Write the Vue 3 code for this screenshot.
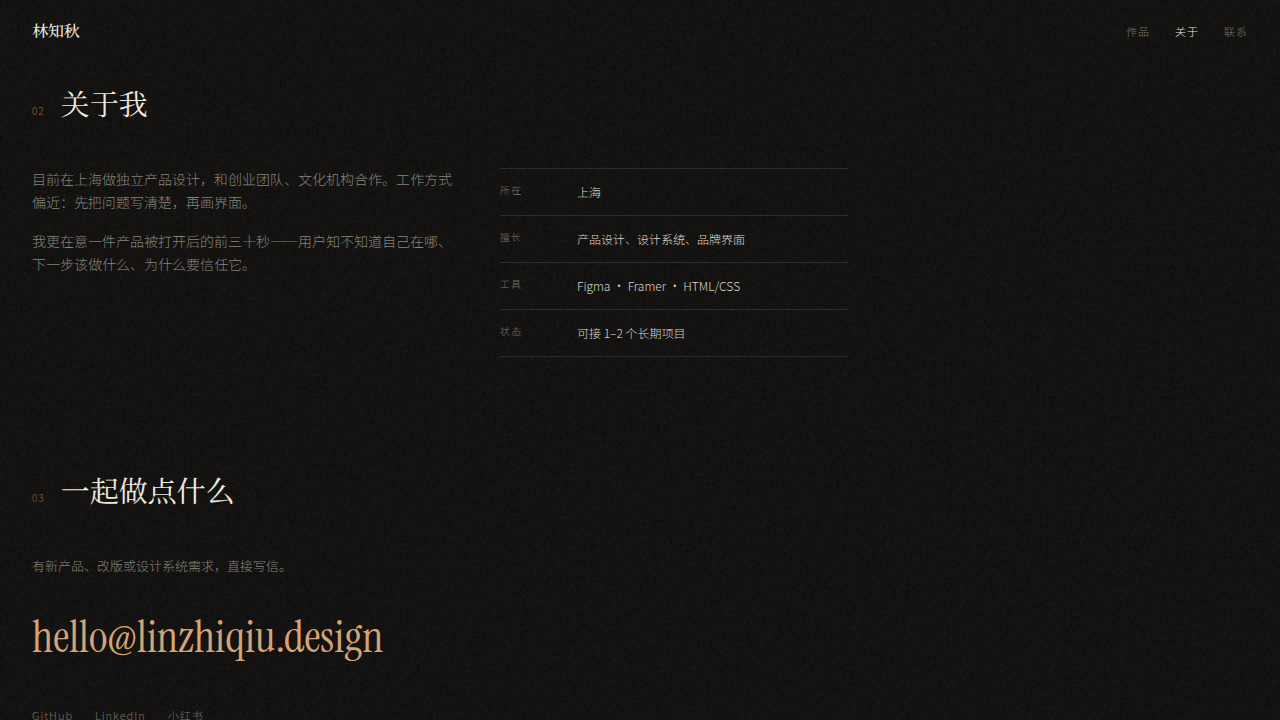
<script setup>
const nav = [
  { label: '作品', href: '#work', active: false },
  { label: '关于', href: '#about', active: true },
  { label: '联系', href: '#contact', active: false },
]
const facts = [
  { term: '所在', value: '上海' },
  { term: '擅长', value: '产品设计、设计系统、品牌界面' },
  { term: '工具', value: 'Figma · Framer · HTML/CSS' },
  { term: '状态', value: '可接 1–2 个长期项目' },
]
const socials = ['GitHub', 'LinkedIn', '小红书']
</script>

<template>
  <div class="page" lang="zh-CN">
    <svg class="grain" aria-hidden="true">
      <filter id="grain-noise" x="0" y="0" width="100%" height="100%">
        <feTurbulence type="fractalNoise" baseFrequency="0.3" numOctaves="3" stitchTiles="stitch" />
        <feColorMatrix type="saturate" values="0" />
      </filter>
      <rect width="100%" height="100%" filter="url(#grain-noise)" />
    </svg>

    <header class="header">
      <a class="logo" href="#top">林知秋</a>
      <nav class="nav">
        <a v-for="n in nav" :key="n.href" :href="n.href" :class="{ active: n.active }">{{ n.label }}</a>
      </nav>
    </header>

    <main>
      <section id="about" class="section about">
        <div class="heading">
          <span class="num">02</span>
          <h2>关于我</h2>
        </div>
        <div class="columns">
          <div class="bio">
            <p>目前在上海做独立产品设计，和创业团队、文化机构合作。工作方式偏近：先把问题写清楚，再画界面。</p>
            <p>我更在意一件产品被打开后的前三十秒——用户知不知道自己在哪、下一步该做什么、为什么要信任它。</p>
          </div>
          <dl class="facts">
            <div v-for="f in facts" :key="f.term" class="fact">
              <dt>{{ f.term }}</dt>
              <dd>{{ f.value }}</dd>
            </div>
          </dl>
        </div>
      </section>

      <section id="contact" class="section">
        <div class="heading">
          <span class="num">03</span>
          <h2>一起做点什么</h2>
        </div>
        <p class="lead">有新产品、改版或设计系统需求，直接写信。</p>
        <a class="email" href="mailto:hello@linzhiqiu.design">hello@linzhiqiu.design</a>
        <div class="socials">
          <a v-for="s in socials" :key="s" href="#contact">{{ s }}</a>
        </div>
      </section>
    </main>
  </div>
</template>

<style>
html,
body {
  background: #100f0d;
}
body {
  margin: 0;
}
html {
  scrollbar-width: none;
}
</style>

<style scoped>
.page {
  position: relative;
  color: #f0ece4;
  font-family: "Noto Sans SC", "Noto Sans CJK SC", sans-serif;
  font-weight: 300;
}
.grain {
  position: fixed;
  inset: 0;
  width: 100%;
  height: 100%;
  opacity: 0.05;
  pointer-events: none;
}
a {
  color: inherit;
  text-decoration: none;
}
.header {
  display: flex;
  align-items: center;
  justify-content: space-between;
  height: 62px;
  padding: 0 32px;
}
.logo,
h2 {
  font-family: "Noto Serif SC", "Noto Serif CJK SC", "Source Han Serif SC", "Noto Sans CJK SC", serif;
}
.logo {
  font-size: 16px;
  line-height: 24px;
  font-weight: 500;
}
.nav {
  display: flex;
  gap: 25px;
  font-size: 11px;
  line-height: 20px;
  letter-spacing: 1px;
  color: #77736b;
}
.nav .active {
  color: #f0ece4;
}
.section {
  max-width: 816px;
  padding: 23px 32px 0;
}
.about {
  padding-bottom: 92px;
}
.heading {
  display: flex;
  align-items: baseline;
  gap: 16px;
  margin-bottom: 47px;
}
.num {
  font-size: 10px;
  letter-spacing: 1px;
  color: #a3603a;
}
h2 {
  margin: 0;
  font-size: 29px;
  line-height: 36px;
  font-weight: 400;
}
.columns {
  display: grid;
  grid-template-columns: minmax(420px, 1.2fr) 1fr;
  gap: 48px;
}
.bio {
  font-size: 14px;
  line-height: 23px;
  color: #86827a;
}
.bio p {
  margin: 0 0 16px;
}
.facts {
  margin: 0;
  border-bottom: 1px solid #2b2a27;
}
.fact {
  display: grid;
  grid-template-columns: 77px 1fr;
  padding: 13px 0;
  border-top: 1px solid #2b2a27;
}
dt {
  font-size: 10px;
  line-height: 16px;
  letter-spacing: 1px;
  color: #77736b;
}
dd {
  margin: 0;
  font-size: 12px;
  line-height: 20px;
  color: #dcd8d0;
}
.lead {
  margin: 0 0 32px;
  font-size: 13px;
  line-height: 22px;
  color: #86827a;
}
.email {
  display: block;
  width: fit-content;
  font-family: "Instrument Serif", "Liberation Serif", serif;
  font-size: 45px;
  line-height: 56px;
  font-weight: 400;
  color: #d4a574;
}
.socials {
  display: flex;
  gap: 22px;
  margin-top: 40px;
  font-size: 11px;
  line-height: 20px;
  letter-spacing: 1px;
  color: #77736b;
}
</style>
